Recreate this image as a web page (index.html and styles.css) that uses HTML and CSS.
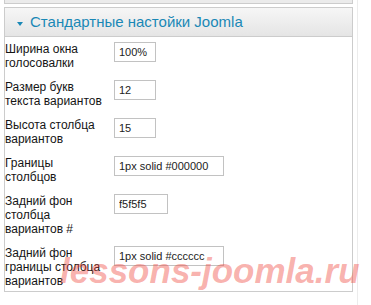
FILE: index.html
```html
<!DOCTYPE html>
<html>
<head>
<meta charset="utf-8">
<link rel="stylesheet" href="styles.css">
</head>
<body>
<div class="page">
  <div class="column">
    <div class="prev"></div>
    <div class="panel">
      <h3 class="toggler"><span class="arrow"></span><span class="title">Стандартные настойки Joomla</span></h3>
      <div class="content">
        <div class="row">
          <div class="label">Ширина окна<br>голосовалки</div>
          <input class="field w-s" type="text" value="100%">
        </div>
        <div class="row">
          <div class="label">Размер букв<br>текста вариантов</div>
          <input class="field w-s" type="text" value="12">
        </div>
        <div class="row">
          <div class="label">Высота столбца<br>вариантов</div>
          <input class="field w-s" type="text" value="15">
        </div>
        <div class="row">
          <div class="label">Границы<br>столбцов</div>
          <input class="field w-l" type="text" value="1px solid #000000">
        </div>
        <div class="row">
          <div class="label">Задний фон<br>столбца<br>вариантов #</div>
          <input class="field w-m" type="text" value="f5f5f5">
        </div>
        <div class="row">
          <div class="label">Задний фон<br>границы столбца<br>вариантов</div>
          <input class="field w-l" type="text" value="1px solid #cccccc">
        </div>
      </div>
    </div>
  </div>
  <div class="edge"></div>
  <div class="watermark">lessons-joomla.ru</div>
</div>
</body>
</html>
```

FILE: styles.css
```css
html, body {
  margin: 0;
  padding: 0;
  background: #ffffff;
}

.page {
  position: relative;
  display: flex;
  align-items: stretch;
  height: 305px;
  padding-left: 4px;
  font-family: "Liberation Sans", Arial, sans-serif;
  overflow: hidden;
}

.column {
  width: 349px;
  display: flex;
  flex-direction: column;
}

.edge {
  width: 1px;
  margin-left: 4px;
  background: #ececec;
}

.prev {
  height: 3px;
  border: 1px solid #cccccc;
  border-top: none;
  background: #ebebeb;
}

.panel {
  margin-top: 3px;
}

.toggler {
  margin: 0;
  height: 28px;
  border: 1px solid #cccccc;
  background: linear-gradient(#f6f6f6, #e5e5e5);
  display: flex;
  align-items: center;
  padding-left: 12px;
  font-weight: normal;
}

.arrow {
  width: 0;
  height: 0;
  border-left: 3px solid transparent;
  border-right: 3px solid transparent;
  border-top: 4px solid #1a88b6;
  margin-top: 4px;
  margin-right: 7px;
}

.title {
  font-size: 15px;
  line-height: 28px;
  color: #1a88b6;
}

.content {
  border: 1px solid #cccccc;
  border-top: none;
  padding: 5px 0 3px 0;
  display: flex;
  flex-direction: column;
  gap: 10px;
}

.row {
  display: grid;
  grid-template-columns: 109px auto;
  align-items: start;
}

.label {
  font-size: 12px;
  line-height: 14px;
  color: #151515;
}

.field {
  box-sizing: border-box;
  height: 20px;
  margin: 0;
  padding: 0 0 0 4px;
  border: 1px solid #c2c2c2;
  background: #ffffff;
  font-family: "Liberation Sans", Arial, sans-serif;
  font-size: 11px;
  color: #222222;
  outline: none;
}

.w-s { width: 42px; }
.w-m { width: 54px; }
.w-l { width: 110px; }

.watermark {
  position: absolute;
  left: 60px;
  top: 253px;
  font-size: 35px;
  line-height: 35px;
  font-weight: bold;
  font-style: italic;
  color: rgba(240, 70, 60, 0.42);
  white-space: nowrap;
  pointer-events: none;
}
```
